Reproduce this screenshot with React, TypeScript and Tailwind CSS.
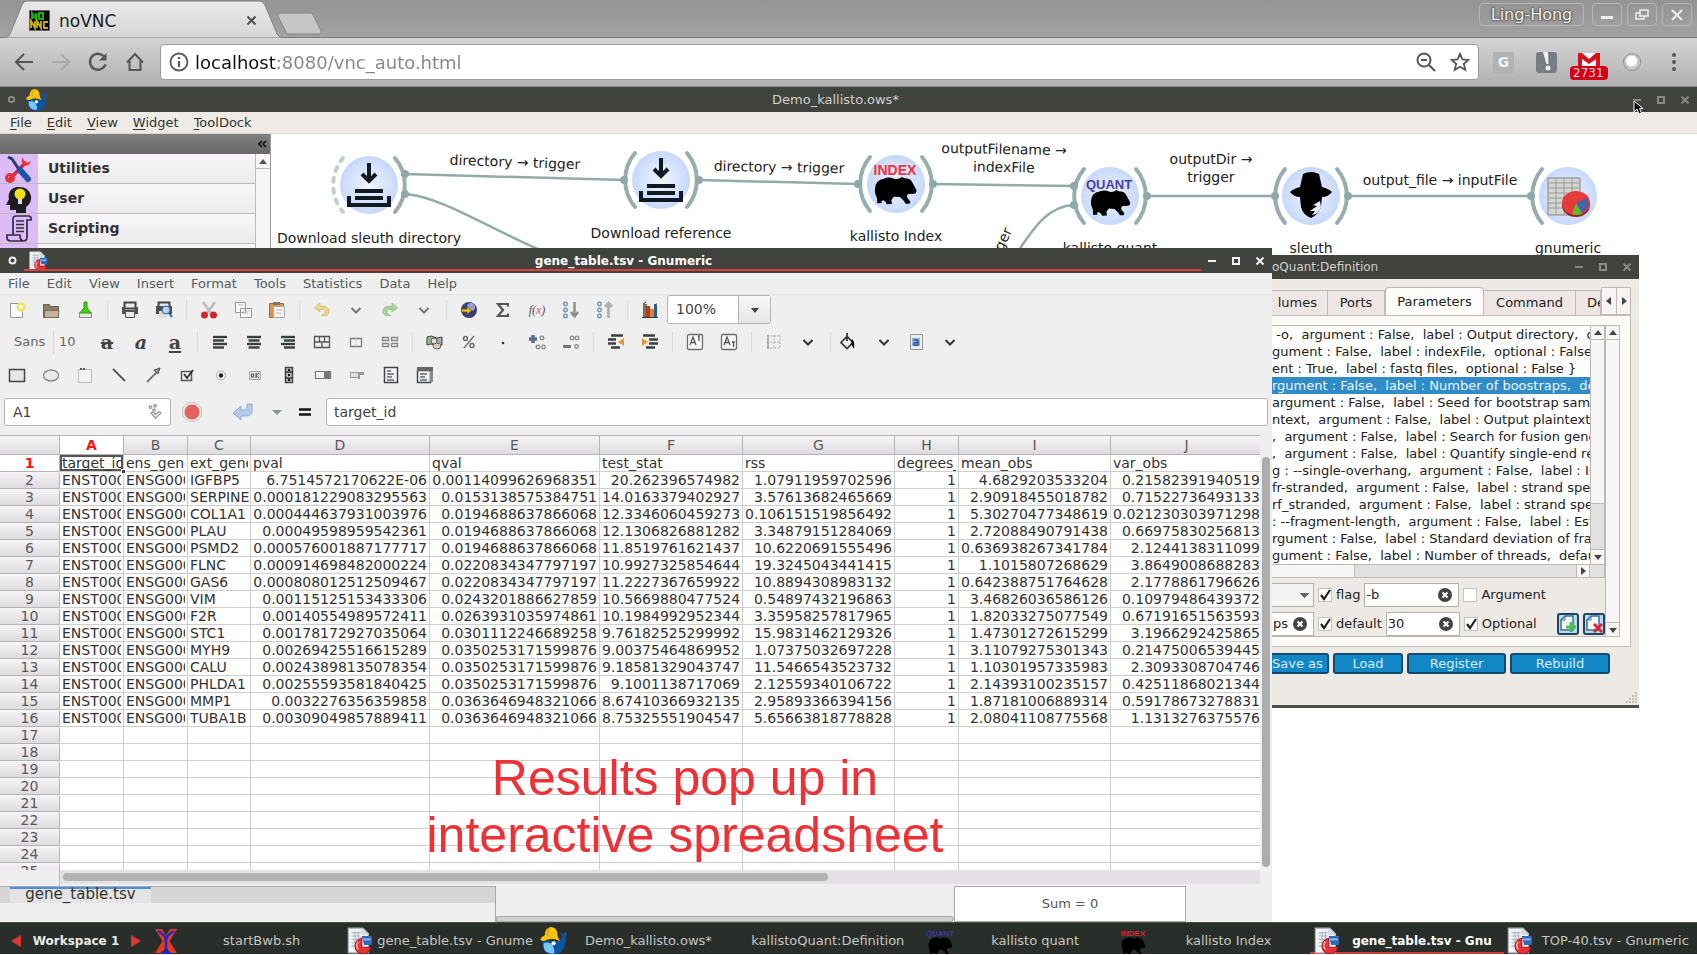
import React from "react";

type Kids = { children?: React.ReactNode };

/* ---------- icons ---------- */

function Ic({ children, label }: Kids & { label?: string }) {
  return (
    <svg width="18" height="18" viewBox="0 0 18 18" fill="none" aria-hidden={label ? undefined : true}>
      {children}
    </svg>
  );
}

const Chevron = ({ color = "#333" }: { color?: string }) => (
  <Ic><path d="M4.500 7l4.500 4.500L13.500 7" stroke={color} strokeWidth="2" /></Ic>
);

const AlignIcon = ({ x }: { x: number[] }) => (
  <Ic>
    {x.map((v, i) => (
      <path key={i} d={`M${v} ${4 + i * 3.5}h${i % 2 ? 11 : 14}`} stroke="#3c3f40" strokeWidth="2.400" />
    ))}
  </Ic>
);

const BearPath =
  "M3 35Q5 8 30 5Q45 -2 60 5Q68 8 78 4L84 0L92 4Q108 4 114 14L127 38Q130 48 120 50L104 51Q97 55 99 61L109 74L107 80L95 80L90 72L78 60L60 59Q50 68 53 75L54 81L38 82L36 76L28 70L22 72L24 78L10 79L9 62Q1 50 3 35Z";

const GnumericDoc = ({ size }: { size: number }) => (
  <svg width={size} height={size} viewBox="0 0 24 24" aria-hidden="true">
    <path d="M2 1h13l5 5v17H2z" fill="#f3f3f3" stroke="#aab0b5" />
    <path d="M5 5h8M5 8h8M5 11h6M5 14h5M5 17h4M8 4v15M11 4v10" stroke="#a9b6c6" strokeWidth="1" />
    <path d="M13 1l7 6h-6z" fill="#cfd6dd" />
    <path d="M14 8h9v8h-7z" fill="#2f6bbd" />
    <path d="M15 11h7" stroke="#8db6ea" strokeWidth="1.800" />
    <path d="M14 10A7 7 0 1 0 22 18h-8z" fill="#e5343a" stroke="#a81c20" />
    <path d="M11 13q-3 4 0 7" stroke="#ff9d9d" fill="none" strokeWidth="1.500" />
  </svg>
);

const Whale = ({ size }: { size: number }) => (
  <svg width={size} height={size} viewBox="0 0 24 24" aria-hidden="true">
    <path d="M3 12h13q3 0 4-4l-2-3 3 1 3-2-1 4q0 16-11 16Q2 23 3 12z" fill="#0a55a6" />
    <path d="M4 14q4-2 7 1 3 4 2 8Q3 23 4 14z" fill="#7cc6f5" />
    <path d="M1 11q1-3 4-4 0-6 5-7 6 0 6 8l2 4q-6-3-11-1-3 2-6 0z" fill="#f9c40f" />
    <path d="M9 1q-2 3-1 7" stroke="#d69d00" fill="none" />
    <circle cx="12.500" cy="14" r="1.800" fill="#fff" />
  </svg>
);

const TaskBear = ({ color, word }: { color: string; word: string }) => (
  <svg width="28" height="30" viewBox="0 0 28 30" aria-hidden="true">
    <text x="14" y="10" textAnchor="middle" fontFamily="Liberation Sans, sans-serif" fontWeight="700" fontSize="8" fill={color}>{word}</text>
    <path d={BearPath} transform="translate(2 11) scale(.19 .22)" fill="#000" />
  </svg>
);

/* ---------- browser chrome ---------- */

function Browser() {
  return (
    <header className="shrink-0 bg-[#9b9b9b]">
      <div className="flex h-[38px] items-start justify-between border-b border-[#7d7d7d] bg-gradient-to-b from-[#949494] to-[#a2a2a2]">
        <div className="flex">
          <div className="relative flex h-[38px] w-[288px] items-center">
            <svg className="absolute inset-0" width="288" height="38" viewBox="0 0 288 38" aria-hidden="true">
              <defs><linearGradient id="tab" x2="0" y2="1"><stop stopColor="#e9e9e9" /><stop offset="1" stopColor="#d6d6d6" /></linearGradient></defs>
              <path d="M0 38q8 1 10-4L22 5q1-4 5-4h232q4 0 6 4l12 29q2 4 8 4z" fill="url(#tab)" stroke="#808080" />
            </svg>
            <div className="relative flex w-full items-center pl-[29px] pr-[30px] pt-[3px]">
              <svg width="21" height="21" viewBox="0 0 21 21" aria-hidden="true">
                <path d="M.5.500h20v20H.5z" fill="#000" stroke="#666" />
                <path d="M3 9V3l4 6V3M10 3h4v6h-4z" stroke="#11b411" strokeWidth="2" fill="none" />
                <path d="M2 18v-7l4 7v-7M8 18v-7l4 7v-7M19 12h-4v6h4" stroke="#c9b20a" strokeWidth="1.800" fill="none" />
              </svg>
              <span className="ml-[9px] flex-1 text-[17px] leading-6 text-[#1c1c1c]">noVNC</span>
              <button aria-label="Close tab">
                <svg width="12" height="12" viewBox="0 0 12 12"><path d="M1.500 1.500l8 8M9.500 1.500l-8 8" stroke="#505050" strokeWidth="2" /></svg>
              </button>
            </div>
          </div>
          <button aria-label="New tab" className="-ml-3 mt-[9px]">
            <svg width="48" height="24" viewBox="0 0 48 24"><path d="M4 1h30q2 0 3 2l8 16q1 3-2 3H13q-2 0-3-2L2 4q-1-3 2-3z" fill="#c6c6c6" stroke="#848484" /></svg>
          </button>
        </div>
        <div className="flex gap-[5px] pr-[5px] pt-[3px]">
          <button className="mr-[3px] h-[23px] w-[105px] rounded-sm border border-[#b5b5b5] text-[16px] leading-5 text-[#f2f2f2] [text-shadow:0_0_2px_#333,0_0_2px_#333]">Ling-Hong</button>
          {["Minimize", "Restore", "Close"].map((n) => (
            <button key={n} aria-label={n} className="flex h-[23px] w-[30px] items-center justify-center rounded-sm border border-[#b5b5b5]">
              <svg width="14" height="14" viewBox="0 0 14 14" fill="none" stroke="#f0f0f0" strokeWidth="2">
                {n === "Minimize" && <path d="M1 9.500h12" strokeWidth="3" />}
                {n === "Restore" && <path d="M5 2h8v6H5zM5 5H1v6h8V8" strokeWidth="1.500" />}
                {n === "Close" && <path d="M2 2l10 10M12 2L2 12" />}
              </svg>
            </button>
          ))}
        </div>
      </div>
      <div className="flex h-[49px] items-center border-b border-[#8b8b8b] bg-gradient-to-b from-[#d4d4d4] to-[#b0b0b0]">
        <nav className="flex w-[160px] shrink-0 gap-[15px] pl-[13px]">
          <button aria-label="Back"><svg width="22" height="22" viewBox="0 0 22 22" fill="none" stroke="#555" strokeWidth="2"><path d="M20 11H3M11 3l-8 8 8 8" /></svg></button>
          <button aria-label="Forward"><svg width="22" height="22" viewBox="0 0 22 22" fill="none" stroke="#aaa" strokeWidth="2"><path d="M2 11h17M11 3l8 8-8 8" /></svg></button>
          <button aria-label="Reload"><svg width="22" height="22" viewBox="0 0 22 22" fill="none" stroke="#555" strokeWidth="2.400"><path d="M18.500 13.500A8 8 0 1 1 16.500 5l2 2" /><path d="M19.500 2v7.500H12z" fill="#555" stroke="none" /></svg></button>
          <button aria-label="Home"><svg width="22" height="22" viewBox="0 0 22 22" fill="none" stroke="#555" strokeWidth="2"><path d="M3 11.500L11 3l8 8.500M5.500 10v9h11v-9" /></svg></button>
        </nav>
        <div className="flex h-[36px] flex-1 items-center rounded border border-[#9a9a9a] bg-white pl-2 pr-2">
          <svg width="20" height="20" viewBox="0 0 20 20" fill="none" stroke="#5a5a5a" strokeWidth="1.800" aria-hidden="true"><circle cx="10" cy="10" r="8.500" /><path d="M10 9v6M10 5v2" strokeWidth="2.200" /></svg>
          <input aria-label="Address" defaultValue="localhost:8080/vnc_auto.html" className="ml-[6px] min-w-0 flex-1 bg-[linear-gradient(90deg,#111_81px,#858585_81px)] bg-clip-text text-[18px] text-transparent outline-none" />
          <button aria-label="Zoom" className="mr-[14px]"><svg width="20" height="20" viewBox="0 0 20 20" fill="none" stroke="#555" strokeWidth="2"><circle cx="8" cy="8" r="6.500" /><path d="M13 13l6 6M5 8h6" /></svg></button>
          <button aria-label="Bookmark"><svg width="20" height="20" viewBox="0 0 20 20" fill="none" stroke="#555" strokeWidth="1.800"><path d="M10 1.800l2.400 5.600 6 .5-4.600 4 1.500 6L10 14.700 4.700 17.900l1.500-6-4.600-4 6-.5z" /></svg></button>
        </div>
        <div className="flex w-[218px] shrink-0 items-center pl-[14px]">
          <button className="h-[21px] w-[21px] bg-[#b2b2b2] text-[14px] font-bold leading-5 text-[#f2f2f2]">G</button>
          <button aria-label="Alert extension" className="ml-[22px]"><svg width="21" height="21" viewBox="0 0 21 21"><rect width="21" height="21" rx="3" fill="#797d82" /><path d="M7 0l5 0 .5 12h-2z" fill="#eee" /><circle cx="12" cy="16" r="2.500" fill="#eee" /></svg></button>
          <button className="ml-[13px] flex flex-col items-center pt-[8px]">
            <svg width="22" height="13" viewBox="0 0 22 13" aria-hidden="true"><path d="M0 0h22v13H0z" fill="#fff" /><path d="M0 0h4l7 6 7-6h4v13h-4V6l-7 5-7-5v7H0z" fill="#d5121c" /></svg>
            <span className="h-[14px] w-[38px] rounded-sm bg-[#d3001c] pl-[3px] text-left text-[12px] leading-[14px] text-[#ffd0d0]">2731</span>
          </button>
          <button aria-label="Recorder extension" className="ml-[14px]"><svg width="20" height="20" viewBox="0 0 20 20"><circle cx="10" cy="10" r="8.500" fill="#c9c9c9" stroke="#8e8e8e" /><circle cx="9.500" cy="9" r="5.500" fill="#fff" /></svg></button>
          <button aria-label="Menu" className="ml-[24px]"><svg width="16" height="20" viewBox="0 0 16 20" fill="#555"><circle cx="8" cy="3" r="2" /><circle cx="8" cy="10" r="2" /><circle cx="8" cy="17" r="2" /></svg></button>
        </div>
      </div>
    </header>
  );
}

function WinButtons({ color }: { color: string }) {
  return (
    <div className="flex gap-[14px]">
      <button aria-label="Minimize window"><svg width="10" height="10" viewBox="0 0 10 10"><path d="M1 5h8" stroke={color} strokeWidth="2" /></svg></button>
      <button aria-label="Maximize window"><svg width="10" height="10" viewBox="0 0 10 10"><path d="M2 2h6v6H2z" stroke={color} strokeWidth="2" fill="none" /></svg></button>
      <button aria-label="Close window"><svg width="10" height="10" viewBox="0 0 10 10"><path d="M1.500 1.500l7 7M8.500 1.500l-7 7" stroke={color} strokeWidth="2" /></svg></button>
    </div>
  );
}

/* ---------- workflow window ---------- */

const nodes = [
  { x: 369, y: 51, kind: "download", label: "Download sleuth directory", ly: 104 },
  { x: 661, y: 46, kind: "download", label: "Download reference", ly: 99 },
  { x: 896, y: 50, kind: "index", label: "kallisto Index", ly: 102 },
  { x: 1110, y: 62, kind: "quant", label: "kallisto quant", ly: 114 },
  { x: 1311, y: 62, kind: "sleuth", label: "sleuth", ly: 114 },
  { x: 1568, y: 62, kind: "gnumeric", label: "gnumeric", ly: 114 },
];

const linkLabels = [
  { x: 515, y: 28, text: "directory → trigger", cls: "rotate-2" },
  { x: 779, y: 33, text: "directory → trigger", cls: "rotate-1" },
  { x: 1004, y: 24, text: "outputFilename →\nindexFile", cls: "rotate-1" },
  { x: 1211, y: 34, text: "outputDir →\ntrigger", cls: "rotate-0" },
  { x: 1440, y: 46, text: "output_file → inputFile", cls: "rotate-0" },
  { x: 1003, y: 105, text: "ger", cls: "-rotate-[65deg]" },
];

function NodeArt({ kind }: { kind: string }) {
  if (kind === "download")
    return (
      <g stroke="#111a20" fill="none">
        <path d="M0-22v16M-7-11l7 7 7-7" strokeWidth="4" />
        <path d="M-14 6h28M-14 13h28" strokeWidth="4" />
        <path d="M-20 11v9h40v-9" strokeWidth="4" />
      </g>
    );
  if (kind === "index" || kind === "quant")
    return (
      <g>
        <text x="-1" y={kind === "index" ? -9 : -7} textAnchor="middle" fontFamily="Liberation Sans, sans-serif" fontWeight="700" fontSize={kind === "index" ? 14 : 13} fill={kind === "index" ? "#f0303e" : "#4a3fa5"}>{kind.toUpperCase()}</text>
        <path d={BearPath} transform={kind === "index" ? "translate(-22 -7) scale(.333)" : "translate(-20 -6) scale(.315)"} fill="#000" />
      </g>
    );
  if (kind === "sleuth")
    return (
      <g>
        <path d="M-8-22q8-4 16 0l3 13q7 2 10 5-4 5-10 5l-1 10q-3 8-10 11-8-3-10-11l-1-10q-6 0-10-5 3-3 10-5z" fill="#000" />
        <path d="M9 5L2 9l4 1-7 5 5 0-3 4q7-1 9-8z" fill="#e8eefc" />
      </g>
    );
  return (
    <g>
      <path d="M-20-18h32v37h-32z" fill="#d4d4d0" stroke="#84847e" />
      <path d="M-19-13h30M-19-8h30M-19-3h30M-19 2h30M-19 7h20M-19 12h18M-12-17v35M-4-17v35M4-17v20" stroke="#9b9b98" />
      <ellipse cx="8" cy="9" rx="14" ry="12" fill="#9b1c1c" />
      <ellipse cx="8" cy="7" rx="14" ry="12" fill="#e53b3b" />
      <path d="M8 7l11-5q4 9-5 15z" fill="#3c66ad" />
      <path d="M8 7l6 11q-6 2-10 0z" fill="#5dbb2f" />
    </g>
  );
}

const arc = (s: number) => `M${s * 26}-27A42 42 0 0 ${s > 0 ? 1 : 0} ${s * 26} 27`;

function Workflow() {
  return (
    <div className="relative flex-1 overflow-hidden bg-white">
      <div className="absolute inset-y-0 -left-[271px] w-[1697px]">
        <svg className="absolute inset-0" width="1697" height="150" viewBox="0 0 1697 150" aria-hidden="true">
          <defs><radialGradient id="node"><stop stopColor="#f0f5ff" /><stop offset="1" stopColor="#c6d8fa" /></radialGradient></defs>
          <g stroke="#93aaab" strokeWidth="2.500" fill="none">
            <path d="M405 40L624 46M405 60C440 62 490 95 540 116M699 46L858 50M933 50L1074 52M1074 71C1050 72 1036 90 1019 116M1147 62H1275M1348 62H1531" />
          </g>
          {nodes.map((n, i) => (
            <g key={n.x} transform={`translate(${n.x} ${n.y})`}>
              <circle r="29" fill="url(#node)" />
              <g strokeWidth="4" strokeLinecap="round" fill="none">
                <path d={arc(-1)} strokeDasharray={i === 0 ? "4 7" : undefined} stroke={i === 0 ? "#c4cdcd" : "#98adae"} />
                {i < 5 && <path d={arc(1)} stroke="#98adae" />}
              </g>
              <NodeArt kind={n.kind} />
            </g>
          ))}
          <g fill="#8fa8aa">
            {[[405, 40], [405, 60], [624, 46], [699, 46], [858, 50], [933, 50], [1074, 52], [1074, 71], [1147, 62], [1275, 62], [1348, 62], [1531, 62]].map(([x, y]) => (
              <circle key={`${x}-${y}`} cx={x} cy={y} r="4" />
            ))}
          </g>
        </svg>
        {nodes.map((n) => (
          <span key={n.label} className="absolute -translate-x-1/2 -translate-y-1/2 whitespace-nowrap text-[14px] leading-[18px] text-[#222]" style={{ left: n.x, top: n.ly }}>{n.label}</span>
        ))}
        {linkLabels.map((l) => (
          <span key={l.x} className="absolute -translate-x-1/2 -translate-y-1/2 whitespace-pre text-center text-[14px] leading-[18px] text-[#222]" style={{ left: l.x, top: l.y }}>
            <span className={`inline-block ${l.cls}`}>{l.text}</span>
          </span>
        ))}
      </div>
    </div>
  );
}

function SideIcon({ name }: { name: string }) {
  return (
    <svg width="28" height="28" viewBox="0 0 28 28" fill="none" aria-hidden="true">
      {name === "Utilities" && (
        <g>
          <path d="M4 25L21 7" stroke="#cf2f3f" strokeWidth="3.500" />
          <path d="M18 2q-3 6 1 8 5 2 7-4l-4 2-3-2z" fill="#e8303f" />
          <circle cx="5" cy="23" r="3.500" stroke="#e8303f" strokeWidth="3" />
          <path d="M3 2l4 2 8 12" stroke="#263f78" strokeWidth="3" />
          <path d="M15 15l8 9" stroke="#1d55a5" strokeWidth="6" strokeLinecap="round" />
        </g>
      )}
      {name === "User" && (
        <g>
          <path d="M14 2C4 2 3 10 4 14l-3 6h4v5h6v3h10v-6q6-4 5-11-2-9-12-9z" fill="#1c1c22" />
          <circle cx="15" cy="9" r="5.500" fill="#f6dd18" /><path d="M13 14h4v5h-4z" fill="#d9d9d9" />
        </g>
      )}
      {name === "Scripting" && (
        <g stroke="#332a3f" strokeWidth="1.700">
          <path d="M8 20V4q0-3 3-3h13q3 1 2 4h-4v17q0 4-4 4H5q-4-1-3-6h13q0 5 3 6" />
          <path d="M11 6h8M11 9.500h8M11 13h8M11 16.500h8" />
        </g>
      )}
    </svg>
  );
}

function MainWindow() {
  return (
    <section className="flex flex-1 flex-col">
      <div className="flex h-[25px] shrink-0 items-center justify-between bg-[#41433f] pl-[7px] pr-[7px] text-[13px] text-[#d0d0cc]">
        <div className="flex items-center gap-[9px]">
          <svg width="9" height="9" viewBox="0 0 9 9" aria-hidden="true"><circle cx="4.500" cy="4.500" r="2.700" fill="none" stroke="#8c8e8a" strokeWidth="1.800" /></svg>
          <Whale size={22} />
        </div>
        <h1 className="pr-[8px] text-[13px]">Demo_kallisto.ows*</h1>
        <WinButtons color="#888a86" />
      </div>
      <nav className="flex h-[22px] shrink-0 items-center gap-[15px] border-b border-[#dcd8d2] bg-[#eeebe6] pl-[10px] text-[13px] leading-5 text-[#333]">
        {["File", "Edit", "View", "Widget", "ToolDock"].map((m) => (
          <button key={m}><span className="underline decoration-1 underline-offset-2">{m[0]}</span>{m.slice(1)}</button>
        ))}
      </nav>
      <div className="flex h-[150px]">
        <aside className="flex w-[271px] shrink-0 flex-col border-r border-[#9a9a9a]">
          <div className="flex h-[20px] shrink-0 items-center justify-end bg-gradient-to-b from-[#808080] to-[#696969] pr-[3px]">
            <button aria-label="Collapse"><svg width="9" height="8" viewBox="0 0 9 8" fill="none" stroke="#111" strokeWidth="1.600"><path d="M4 1L1 4l3 3M8 1L5 4l3 3" /></svg></button>
          </div>
          <div className="flex min-h-0 flex-1 overflow-hidden">
            <ul className="flex-1">
              {["Utilities", "User", "Scripting"].map((s) => (
                <li key={s} className="flex h-[30px] items-center border-b border-[#bdbabd] bg-gradient-to-b from-[#f9f6f9] to-[#eceaec]">
                  <span className="flex h-full w-[38px] items-center justify-center bg-[#dcbcf6]"><SideIcon name={s} /></span>
                  <button className="pl-[10px] text-[14px] font-bold text-[#333]">{s}</button>
                </li>
              ))}
              <li className="flex h-[30px] bg-[#f7f4f7]"><span className="w-[38px] bg-[#dcbcf6]" /></li>
            </ul>
            <div className="w-[15px] border-l border-[#bbb] bg-[#f8f5f7]">
              <button aria-label="Scroll up" className="flex h-[15px] w-full items-center justify-center border-b border-[#bbb]"><svg width="8" height="5" viewBox="0 0 8 5"><path d="M0 5l4-5 4 5z" fill="#555" /></svg></button>
            </div>
          </div>
        </aside>
        <Workflow />
      </div>
    </section>
  );
}

/* ---------- definition dialog ---------- */

const params = [
  " -o,  argument : False,  label : Output directory,  def",
  "gument : False,  label : indexFile,  optional : False }",
  "ent : True,  label : fastq files,  optional : False }",
  "rgument : False,  label : Number of boostraps,  def",
  "argument : False,  label : Seed for bootstrap samp",
  "ntext,  argument : False,  label : Output plaintext",
  ",  argument : False,  label : Search for fusion gene",
  ",  argument : False,  label : Quantify single-end rea",
  "g : --single-overhang,  argument : False,  label : Inc",
  "fr-stranded,  argument : False,  label : strand spec",
  "rf_stranded,  argument : False,  label : strand spec",
  ": --fragment-length,  argument : False,  label : Est",
  "rgument : False,  label : Standard deviation of frag",
  "gument : False,  label : Number of threads,  default",
];

function Check({ label, checked }: { label: string; checked?: boolean }) {
  return (
    <label className="relative flex items-center gap-[4px]">
      <input type="checkbox" defaultChecked={checked} className="peer size-[14px] appearance-none border border-[#c5c1bc] bg-white" />
      <svg className="absolute left-[2px] hidden peer-checked:block" width="11" height="12" viewBox="0 0 11 12" fill="none" aria-hidden="true"><path d="M1 6l3 4 6-9" stroke="#222" strokeWidth="2.200" /></svg>
      {label}
    </label>
  );
}

function ClearField({ label, value, cls }: { label: string; value: string; cls: string }) {
  return (
    <div className={`flex h-[24px] items-center border border-[#b3afab] bg-white pr-[6px] ${cls}`}>
      <input aria-label={label} defaultValue={value} className="w-0 min-w-0 flex-1 pl-[1px] outline-none" />
      <button aria-label={`Clear ${label}`}><svg width="14" height="14" viewBox="0 0 14 14"><circle cx="7" cy="7" r="7" fill="#444" /><path d="M4.500 4.500l5 5M9.500 4.500l-5 5" stroke="#fff" strokeWidth="2" /></svg></button>
    </div>
  );
}

const Tri = ({ d }: { d: string }) => (
  <svg width="10" height="10" viewBox="0 0 10 10" aria-hidden="true"><path d={d} fill="#444" /></svg>
);
const UP = "M1 7l4-5 4 5z";
const DOWN = "M1 3l4 5 4-5z";
const LEFT = "M7 1L2 5l5 4z";
const RIGHT = "M3 1l5 4-5 4z";

function Definition() {
  const tab = "flex h-[25px] items-center border border-b-0 border-l-0 border-[#c0bbb7] bg-[#eee6e4]";
  return (
    <section className="absolute left-[1272px] top-[168px] flex h-[453px] w-[367px] flex-col overflow-hidden border-b-[3px] border-[#4b4f4b] bg-[#edeae5] text-[13px] text-[#222]">
      <div className="flex h-[24px] shrink-0 items-center justify-between bg-[#41433f] pr-[7px] text-[#d0d0cc]">
        <h2 className="text-[12px]">oQuant:Definition</h2>
        <WinButtons color="#888a86" />
      </div>
      <div className="flex h-[36px] shrink-0 items-end pr-[8px]" role="tablist">
        <button role="tab" className={`${tab} w-[56px] justify-end pr-[10px]`}>lumes</button>
        <button role="tab" className={`${tab} w-[57px] justify-center`}>Ports</button>
        <button role="tab" aria-selected="true" className="flex h-[28px] w-[99px] items-center justify-center rounded-t border border-b-0 border-[#c0bbb7] bg-[#fdfcfa]">Parameters</button>
        <button role="tab" className={`${tab} w-[92px] justify-center`}>Command</button>
        <button role="tab" className={`${tab} w-[25px] overflow-hidden pl-[11px]`}>De</button>
        <button aria-label="Previous tabs" className="flex h-[28px] w-[15px] items-center justify-center border border-r-0 border-[#c0bbb7] bg-[#f7f5f3]"><Tri d={LEFT} /></button>
        <button aria-label="Next tabs" className="flex h-[28px] w-[15px] items-center justify-center border border-[#c0bbb7] bg-[#f7f5f3]"><Tri d={RIGHT} /></button>
      </div>
      <div className="mr-[8px] border border-l-0 border-[#c0bbb7] bg-[#fcfaf6] pb-[9px] pr-[10px] pt-[9px]">
        <div className="flex border border-l-0 border-[#bdb9b5]">
          <div className="min-w-0 flex-1 bg-[#edeae5]">
            <div className="flex">
              <ul className="h-[238px] min-w-0 flex-1 overflow-hidden bg-white">
                {params.map((p, i) => (
                  <li key={p} className={`h-[17px] overflow-hidden whitespace-pre leading-[17px] ${i === 3 ? "bg-[#308cc6] text-[#e9f4fb]" : ""}`}>{p}</li>
                ))}
              </ul>
              <div className="flex w-[15px] flex-col border-x border-[#bdb9b5] bg-[#f8f5f7]">
                <button aria-label="Scroll list up" className="flex h-[14px] items-center justify-center border-b border-[#bdb9b5]"><Tri d={UP} /></button>
                <div className="flex-1" />
                <div className="h-[47px] border-y border-[#bdb9b5] bg-[#e2e1e1]" />
                <button aria-label="Scroll list down" className="flex h-[14px] items-center justify-center"><Tri d={DOWN} /></button>
              </div>
            </div>
            <div className="flex h-[14px] border-y border-r border-[#bdb9b5] bg-[#e2e1e1]">
              <div className="w-[83px] border-r border-[#bdb9b5] bg-[#f8f5f7]" />
              <div className="flex-1" />
              <button aria-label="Scroll list right" className="mr-[14px] flex w-[14px] items-center justify-center border-x border-[#bdb9b5] bg-[#f8f5f7]"><Tri d={RIGHT} /></button>
            </div>
            <div className="flex h-[34px] items-center gap-[4px]">
              <select aria-label="Parameter type" className="h-[24px] w-[42px] shrink-0 appearance-none border border-l-0 border-[#b3afab] bg-[#f6f3f4] bg-[linear-gradient(45deg,transparent_50%,#666_50%),linear-gradient(-45deg,transparent_50%,#666_50%)] bg-[length:5px_5px,5px_5px] bg-[position:27px_9px,32px_9px] bg-no-repeat"><option /></select>
              <Check label="flag" checked />
              <ClearField label="flag value" value="-b" cls="w-[95px]" />
              <Check label="Argument" />
            </div>
            <div className="flex h-[24px] items-center gap-[4px]">
              <ClearField label="label value" value="ps" cls="w-[42px] shrink-0 border-l-0" />
              <Check label="default" checked />
              <ClearField label="default value" value="30" cls="w-[74px]" />
              <Check label="Optional" checked />
              <div className="ml-auto flex gap-[4px]">
                {["Add", "Remove"].map((n) => (
                  <button key={n} aria-label={n} className="flex size-[22px] items-center justify-center rounded-[3px] border-2 border-[#1f4560] bg-[#b5dcf0]">
                    <svg width="18" height="18" viewBox="0 0 18 18" fill="none">
                      <path d="M6 1h8v14H2V5z" fill="#f4fbff" stroke="#3f6c9c" strokeWidth="1.500" /><path d="M6 1v4H2" stroke="#3f6c9c" />
                      {n === "Add" ? <path d="M12 7v10M7 12h10" stroke="#4cc04f" strokeWidth="3" /> : <path d="M9 9l8 8M17 9l-8 8" stroke="#e02434" strokeWidth="3" />}
                    </svg>
                  </button>
                ))}
              </div>
            </div>
          </div>
          <div className="flex w-[14px] shrink-0 flex-col justify-between border-l border-[#bdb9b5] bg-[#f8f5f7]">
            <button aria-label="Scroll up" className="flex h-[14px] items-center justify-center border-b border-[#bdb9b5]"><Tri d={UP} /></button>
            <button aria-label="Scroll down" className="flex h-[14px] items-center justify-center border-t border-[#bdb9b5]"><Tri d={DOWN} /></button>
          </div>
        </div>
      </div>
      <div className="mt-[6px] flex gap-[4px] text-[#d8edf9]">
        <button className="h-[21px] w-[57px] whitespace-nowrap rounded-r-[3px] border-2 border-l-0 border-[#17486e] bg-[#1287c6] pr-[8px] text-right leading-4">Save as</button>
        <button className="h-[21px] w-[70px] rounded-[3px] border-2 border-[#17486e] bg-[#1287c6] leading-4">Load</button>
        <button className="h-[21px] w-[99px] rounded-[3px] border-2 border-[#17486e] bg-[#1287c6] leading-4">Register</button>
        <button className="h-[21px] w-[100px] rounded-[3px] border-2 border-[#17486e] bg-[#1287c6] leading-4">Rebuild</button>
      </div>
      <svg className="absolute bottom-0 right-0" width="14" height="14" viewBox="0 0 14 14" fill="#c2beb8" aria-hidden="true">
        <path d="M10 1h2v2h-2zM7 4h2v2H7zM10 4h2v2h-2zM4 7h2v2H4zM7 7h2v2H7zM10 7h2v2h-2zM1 10h2v2H1zM4 10h2v2H4zM7 10h2v2H7zM10 10h2v2h-2z" />
      </svg>
    </section>
  );
}

/* ---------- Gnumeric window ---------- */

function Tool({ name, children }: Kids & { name: string }) {
  return <button aria-label={name} className="flex w-[34px] shrink-0 items-center justify-center">{children}</button>;
}
const Sep = () => <span className="mx-[5px] h-[20px] w-px shrink-0 bg-[#d9d9d9]" />;

function ToolbarMain() {
  return (
    <div className="flex h-[29px] items-center">
      <Tool name="New"><Ic><path d="M2.500 2.500h12v14h-12z" fill="#fafafa" stroke="#999" /><circle cx="13" cy="6" r="4.500" fill="#efe25a" /><circle cx="13" cy="6" r="2" fill="#fff" /></Ic></Tool>
      <Tool name="Open"><Ic><path d="M1.500 3.500h6l1 2h8v11h-15z" fill="#8f7c69" stroke="#665" /><path d="M3 9.500h14l-1 7H2.500z" fill="#c9b49c" stroke="#776b5e" /></Ic></Tool>
      <Tool name="Save"><Ic><path d="M3.500 11.500h12v5h-12z" fill="#e3e6e3" stroke="#8b8f8b" /><path d="M8 1h3v6q3 3 4 5H4q1-2 4-5z" fill="#45cf14" stroke="#2e9b0b" /></Ic></Tool>
      <Sep />
      <Tool name="Print"><Ic><path d="M3.500 1.500h11v6h-11z" fill="#e8e8e8" stroke="#444" strokeWidth="2" /><path d="M1 6h3v3h10V6h3v7H1z" fill="#4b4f52" /><path d="M4.500 10.500h9v6h-9z" fill="#e9e9e9" stroke="#555" /></Ic></Tool>
      <Tool name="Print preview"><Ic><path d="M3.500 1.500h11v6h-11z" fill="#dce8f5" stroke="#444" strokeWidth="2" /><path d="M1 5h16v8H1z" fill="#4b4f52" /><path d="M4 10h8v7H4z" fill="#ddd" /><circle cx="11" cy="9" r="4" fill="#b7d4f2" stroke="#2f62a8" /><path d="M14 12l3 4" stroke="#2f62a8" strokeWidth="2" /></Ic></Tool>
      <Sep />
      <Tool name="Cut"><Ic><path d="M3 1l8 11M15 1L7 12" stroke="#b9bbbb" strokeWidth="2.500" /><circle cx="4.500" cy="14" r="3.500" fill="#d3252c" /><circle cx="13.500" cy="14" r="3.500" fill="#d3252c" /></Ic></Tool>
      <Tool name="Copy"><Ic><path d="M1.500 1.500h10v10h-10zM6.500 7.500h11v9h-11z" fill="#f7f7f7" stroke="#999" /><path d="M9 10h6M9 12h5M4 4h5" stroke="#bbb" /></Ic></Tool>
      <Tool name="Paste"><Ic><path d="M1.500 2.500h14v14h-14z" fill="#d8984d" stroke="#a06a28" /><path d="M5 1h7v3H5z" fill="#777" /><path d="M5.500 5.500h11v11h-11z" fill="#f5f3f0" stroke="#aaa" /><path d="M8 9h6M8 12h5" stroke="#bbb" /></Ic></Tool>
      <Sep />
      <Tool name="Undo"><Ic><path d="M7 2L1.500 7 7 11V8.500q6-1 5 3-1 3-4 3 8 1 8-4 0-6-9-5z" fill="#ecd48a" stroke="#d8c07a" /></Ic></Tool>
      <Tool name="Undo history"><Chevron color="#777" /></Tool>
      <Tool name="Redo"><Ic><path d="M11 2l5.500 5-5.500 4V8.500q-6-1-5 3 1 3 4 3-8 1-8-4 0-6 9-5z" fill="#a8d59b" stroke="#93c386" /></Ic></Tool>
      <Tool name="Redo history"><Chevron color="#777" /></Tool>
      <Sep />
      <Tool name="Hyperlink"><Ic><circle cx="9" cy="9" r="8" fill="#3c3f74" /><circle cx="11" cy="6" r="4" fill="#9a9fd0" /><path d="M1 8h6V5.500l4.500 4-4.500 4V11H2z" fill="#e9bd28" stroke="#6b5205" strokeWidth=".7" /></Ic></Tool>
      <Tool name="Sum"><Ic><path d="M14 5.500V3H4l5 6-5 6h10v-2.500" stroke="#555" strokeWidth="2.200" /></Ic></Tool>
      <Tool name="Function"><span className="font-['Liberation_Serif',serif] text-[12px] italic leading-4 text-[#555]">f(<span className="text-[#d85a44]">x</span>)</span></Tool>
      <Tool name="Sort ascending"><Ic><g stroke="#6f87ad" strokeWidth="1.300"><circle cx="3.500" cy="3" r="1.800" /><circle cx="3.500" cy="9" r="1.800" /><circle cx="3.500" cy="15" r="1.800" /></g><path d="M12.500 1v14M9 11l3.500 4.500L16 11" stroke="#8e9090" strokeWidth="2.500" /></Ic></Tool>
      <Tool name="Sort descending"><Ic><g stroke="#6f87ad" strokeWidth="1.300"><circle cx="3.500" cy="3" r="1.800" /><circle cx="3.500" cy="9" r="1.800" /><circle cx="3.500" cy="15" r="1.800" /></g><path d="M12.500 17V3M9 6l3.500-4L16 6" stroke="#b0b2b2" strokeWidth="2.800" /></Ic></Tool>
      <Sep />
      <Tool name="Chart"><Ic><path d="M2 3h4v13H2z" fill="#4d8a49" /><path d="M5 5h4v11H5z" fill="#c93226" /><path d="M9 8h4v8H9z" fill="#d9862c" /><path d="M13 4h3v12h-3z" fill="#2b5c94" /><path d="M1 16.500h16M2 3l3-2M13 4l3-1" stroke="#333" /></Ic></Tool>
      <div className="flex h-[29px] w-[104px] rounded-[3px] border border-[#b4b2b4] bg-white">
        <input aria-label="Zoom" defaultValue="100%" className="w-[70px] pl-[8px] text-[14px] text-[#444] outline-none" />
        <button aria-label="Zoom levels" className="flex flex-1 items-center justify-center border-l border-[#b4b2b4] bg-gradient-to-b from-[#f8f8f8] to-[#e6e5e6]"><Tri d={DOWN} /></button>
      </div>
    </div>
  );
}

const Letter = ({ cls }: { cls: string }) => (
  <span className={`font-['DejaVu_Serif',serif] text-[19px] font-bold leading-4 text-[#444] ${cls}`}>a</span>
);

function ToolbarFormat() {
  return (
    <div className="flex h-[35px] items-center pl-[14px] text-[13px] text-[#666]">
      <button className="w-[39px] text-left">Sans</button>
      <span className="h-[24px] w-px bg-[#d9d9d9]" />
      <button className="w-[36px] pl-[5px] text-left">10</button>
      <Tool name="Bold"><Letter cls="line-through decoration-2" /></Tool>
      <Tool name="Italic"><Letter cls="italic" /></Tool>
      <Tool name="Underline"><Letter cls="underline decoration-2 underline-offset-2" /></Tool>
      <Sep />
      <Tool name="Align left"><AlignIcon x={[2, 2, 2, 2]} /></Tool>
      <Tool name="Align center"><AlignIcon x={[2, 3.5, 2, 3.5]} /></Tool>
      <Tool name="Align right"><AlignIcon x={[2, 5, 2, 5]} /></Tool>
      <Tool name="Center across"><Ic><path d="M1.500 3.500h15v11h-15zM1.500 9h15M6.500 3.500V9M11.500 3.500V9M9 9v5" stroke="#555" strokeWidth="1.300" /></Ic></Tool>
      <Tool name="Merge cells"><Ic><path d="M3.500 5.500h11v8h-11z" stroke="#777" strokeWidth="1.300" fill="#f4f4f4" /><path d="M9 5v9" stroke="#bbb" strokeDasharray="1 1" /></Ic></Tool>
      <Tool name="Split cells"><Ic><path d="M1.500 4.500h6v3h-6zM10.500 4.500h6v3h-6zM1.500 10.500h6v3h-6zM10.500 10.500h6v3h-6z" stroke="#888" strokeWidth="1.300" /></Ic></Tool>
      <Sep />
      <Tool name="Currency"><Ic><path d="M1 4q5-2 7 0t8 0v8q-5 2-8 0t-7 0z" fill="#a4aca3" stroke="#444" /><circle cx="8" cy="8" r="3" fill="#dfe3dc" stroke="#555" /><ellipse cx="11" cy="13" rx="4" ry="3" fill="#d9cfae" stroke="#666" /></Ic></Tool>
      <Tool name="Percent"><Ic><path d="M14 3L4 15" stroke="#777" strokeWidth="1.500" /><circle cx="5.500" cy="5.500" r="2" stroke="#666" strokeWidth="1.400" /><circle cx="12" cy="12.500" r="2" stroke="#666" strokeWidth="1.400" /></Ic></Tool>
      <Tool name="Thousands"><Ic><circle cx="9" cy="10" r="1.300" fill="#333" /></Ic></Tool>
      <Tool name="More decimals"><Ic><path d="M5 2v8M1 6h8" stroke="#56718d" strokeWidth="3.500" /><g stroke="#888" strokeWidth="1.300"><circle cx="14" cy="5" r="1.800" /><circle cx="10" cy="14" r="1.800" /><circle cx="15.500" cy="14" r="1.800" /></g></Ic></Tool>
      <Tool name="Fewer decimals"><Ic><path d="M1 13.500h8" stroke="#777" strokeWidth="3" /><g stroke="#888" strokeWidth="1.300"><circle cx="10" cy="5" r="1.800" /><circle cx="15" cy="5" r="1.800" /><circle cx="14.500" cy="13.500" r="1.800" /></g></Ic></Tool>
      <Sep />
      <Tool name="Decrease indent"><Ic><path d="M4 2.500h12M1 6.500h8M1 10.500h8M4 14.500h9" stroke="#3c3f40" strokeWidth="2.400" /><path d="M17 5v8l-6-4z" fill="#e8973a" /></Ic></Tool>
      <Tool name="Increase indent"><Ic><path d="M2 2.500h12M8 6.500h9M8 10.500h9M5 14.500h9" stroke="#3c3f40" strokeWidth="2.400" /><path d="M1 5v8l6-4z" fill="#e8973a" /></Ic></Tool>
      <Sep />
      <Tool name="Superscript"><Ic><rect x="1.500" y="1.500" width="15" height="15" rx="1.500" fill="#f8f8f8" stroke="#6b6b6b" strokeWidth="1.300" /><path d="M4 12l3-8 3 8M5 9.500h4M12 4l1-1v5" stroke="#555" strokeWidth="1.300" /></Ic></Tool>
      <Tool name="Subscript"><Ic><rect x="1.500" y="1.500" width="15" height="15" rx="1.500" fill="#f8f8f8" stroke="#6b6b6b" strokeWidth="1.300" /><path d="M4 12l3-8 3 8M5 9.500h4M12 9h3M13.500 9v5" stroke="#555" strokeWidth="1.300" /></Ic></Tool>
      <Sep />
      <Tool name="Borders"><Ic><path d="M3 2v14M9 2v14M15 2v14M2 9h14M2 15h14M2 3h14" stroke="#aaa" strokeDasharray="2 1.500" /><path d="M3 2v14" stroke="#888" /></Ic></Tool>
      <Tool name="Border styles"><Chevron /></Tool>
      <Sep />
      <div className="flex gap-[4px]">
        <button aria-label="Fill color" className="flex w-[22px] justify-center"><Ic><path d="M3 9.500L9 3.500l6 6-6 6zM9 0v8" stroke="#333" strokeWidth="1.700" fill="#eee" /><path d="M14 6q3 2 2 10l-3-5z" fill="#111" /></Ic></button>
        <Tool name="Fill colors"><span className="pl-[10px]"><Chevron /></span></Tool>
      </div>
      <Tool name="Font color"><span className="pl-[6px]"><Ic><path d="M3.500 1.500h12v15h-12z" fill="#e9eff6" stroke="#999" /><path d="M5 5h8v8H5z" fill="#8fb2da" /><path d="M7 7q4-1 4 2v3q-4 1-4-1t4-1" stroke="#2c5488" strokeWidth="1.400" /></Ic></span></Tool>
      <Tool name="Font colors"><span className="pl-[6px]"><Chevron /></span></Tool>
    </div>
  );
}

function ToolbarObjects() {
  return (
    <div className="flex h-[32px] items-center">
      <Tool name="Rectangle"><Ic><path d="M1.500 3.500h15v12h-15z" stroke="#444" strokeWidth="1.500" fill="#e6e6e6" /></Ic></Tool>
      <Tool name="Ellipse"><Ic><ellipse cx="9" cy="9.500" rx="7.500" ry="5.500" stroke="#888" strokeWidth="1.300" fill="#e9e9e9" /></Ic></Tool>
      <Tool name="Frame"><Ic><path d="M2.500 3.500h13v13h-13z" stroke="#bbb" fill="#f2f2f2" /><path d="M4 3h5" stroke="#555" strokeWidth="2" strokeDasharray="2 1" /></Ic></Tool>
      <Tool name="Line"><Ic><path d="M3 3l12 12" stroke="#555" strokeWidth="1.800" /></Ic></Tool>
      <Tool name="Arrow"><Ic><path d="M3 16L14 5" stroke="#777" strokeWidth="1.800" /><path d="M10 4l6-2-2 6z" fill="#9b9460" stroke="#555" /></Ic></Tool>
      <Tool name="Check box"><Ic><path d="M3.500 5.500h10v9h-10z" stroke="#555" strokeWidth="1.500" /><path d="M6 8l3 4 6-8" stroke="#333" strokeWidth="1.800" /></Ic></Tool>
      <Tool name="Radio button"><Ic><circle cx="9" cy="9.500" r="4.500" stroke="#aaa" fill="#f7f7f7" /><circle cx="9" cy="9.500" r="2.200" fill="#222" /></Ic></Tool>
      <Tool name="Button"><Ic><path d="M3.500 5.500h11v8h-11z" stroke="#aaa" fill="#ddd" /><path d="M5.500 8h2v3h-2zM10 7v5M13 7l-3 2.500 3 2.500" stroke="#555" /></Ic></Tool>
      <Tool name="Scroll bar"><Ic><path d="M5.500 1.500h7v15h-7z" stroke="#444" fill="#bbb" strokeWidth="1.500" /><path d="M5 6h8M5 12h8" stroke="#333" strokeWidth="1.500" /><path d="M9 3v2M9 8v2M9 13v2" stroke="#111" strokeWidth="2" /></Ic></Tool>
      <Tool name="Spin button"><Ic><path d="M1.500 5.500h15v7h-15z" stroke="#777" fill="#f5f5f5" strokeWidth="1.200" /><path d="M10 6h6v6h-6z" fill="#777" /></Ic></Tool>
      <Tool name="Slider"><Ic><path d="M2.500 6.500h8v5h-8z" stroke="#999" fill="#ddd" /><path d="M10 6h6v3h-4v4h-2z" fill="#999" /></Ic></Tool>
      <Tool name="List"><Ic><path d="M2.500 1.500h13v15h-13z" stroke="#444" strokeWidth="1.500" fill="#f5f5f5" /><path d="M5 5h4M5 8h7M5 11h5M5 14h7" stroke="#56647a" strokeWidth="1.300" /></Ic></Tool>
      <Tool name="Combo box"><Ic><path d="M1.500 4.500h13v12h-13z" stroke="#444" strokeWidth="1.500" fill="#f5f5f5" /><path d="M1 1h16v4H1z" fill="#666" /><path d="M14 5h3v11h-3z" fill="#888" /><path d="M4 8h7M4 11h5M4 14h7" stroke="#56647a" strokeWidth="1.300" /></Ic></Tool>
    </div>
  );
}

const cols = ["A", "B", "C", "D", "E", "F", "G", "H", "I", "J"];
const heads = ["target_id", "ens_gene", "ext_gene", "pval", "qval", "test_stat", "rss", "degrees_", "mean_obs", "var_obs"];
const rows = [
  ["IGFBP5", "6.7514572170622E-06", "0.00114099626968351", "20.262396574982", "1.07911959702596", "4.6829203533204", "0.21582391940519"],
  ["SERPINE", "0.000181229083295563", "0.0153138575384751", "14.0163379402927", "3.57613682465669", "2.90918455018782", "0.71522736493133"],
  ["COL1A1", "0.000444637931003976", "0.0194688637866068", "12.3346060459273", "0.106151519856492", "5.30270477348619", "0.021230303971298"],
  ["PLAU", "0.00049598959542361", "0.0194688637866068", "12.1306826881282", "3.34879151284069", "2.72088490791438", "0.66975830256813"],
  ["PSMD2", "0.000576001887177717", "0.0194688637866068", "11.8519761621437", "10.6220691555496", "0.636938267341784", "2.1244138311099"],
  ["FLNC", "0.000914698482000224", "0.0220834347797197", "10.9927325854644", "19.3245043441415", "1.1015807268629", "3.8649008688283"],
  ["GAS6", "0.000808012512509467", "0.0220834347797197", "11.2227367659922", "10.8894308983132", "0.642388751764628", "2.1778861796626"],
  ["VIM", "0.00115125153433306", "0.0243201886627859", "10.5669880477524", "0.54897432196863", "3.46826036586126", "0.10979486439372"],
  ["F2R", "0.00140554989572411", "0.0263931035974861", "10.1984992952344", "3.35958257817965", "1.82033275077549", "0.67191651563593"],
  ["STC1", "0.00178172927035064", "0.0301112246689258", "9.76182525299992", "15.9831462129326", "1.47301272615299", "3.1966292425865"],
  ["MYH9", "0.00269425516615289", "0.0350253171599876", "9.00375464869952", "1.07375032697228", "3.11079275301343", "0.21475006539445"],
  ["CALU", "0.00243898135078354", "0.0350253171599876", "9.18581329043747", "11.5466543523732", "1.10301957335983", "2.3093308704746"],
  ["PHLDA1", "0.00255593581840425", "0.0350253171599876", "9.1001138717069", "2.12559340106722", "2.14393100235157", "0.42511868021344"],
  ["MMP1", "0.0032276356359858", "0.0363646948321066", "8.67410366932135", "2.95893366394156", "1.87181006889314", "0.59178673278831"],
  ["TUBA1B", "0.00309049857889411", "0.0363646948321066", "8.75325551904547", "5.65663818778828", "2.08041108775568", "1.1313276375576"],
];
const grid: string[][] = [
  heads,
  ...rows.map((r) => ["ENST000", "ENSG000", ...r.slice(0, 5), "1", ...r.slice(5)]),
  ...Array.from({ length: 9 }, () => cols.map(() => "")),
];

function Sheet() {
  return (
    <div className="flex min-h-0 flex-1">
      <div className="relative min-w-0 flex-1 overflow-hidden bg-white">
        <table className="w-[1263px] table-fixed border-separate border-spacing-0 text-[14px] text-[#333]">
          <colgroup>
            <col className="w-[60px]" /><col className="w-[64px]" /><col className="w-[64px]" /><col className="w-[63px]" /><col className="w-[179px]" />
            <col className="w-[170px]" /><col className="w-[143px]" /><col className="w-[152px]" /><col className="w-[64px]" /><col className="w-[152px]" /><col />
          </colgroup>
          <thead>
            <tr>
              <th aria-label="Select all" className="h-[20px] border-b border-r border-t border-[#b5b3b5] bg-gradient-to-b from-[#f6f4f6] to-[#dedcde] p-0" />
              {cols.map((c, i) => (
                <th key={c} scope="col" className={`h-[20px] border-b border-r border-t border-[#b5b3b5] bg-gradient-to-b p-0 leading-[18px] ${i === 0 ? "from-white to-white font-bold text-[#f81414]" : "from-[#f6f4f6] to-[#dedcde] font-normal text-[#555a5b]"}`}>{c}</th>
              ))}
            </tr>
          </thead>
          <tbody>
            {grid.map((r, i) => (
              <tr key={i}>
                <th scope="row" className={`h-[17px] rounded-r-[2px] border-b border-r border-[#b5b3b5] bg-gradient-to-b p-0 leading-[16px] ${i === 0 ? "from-white to-white font-bold text-[#f81414]" : "from-[#f6f4f6] to-[#dedcde] font-normal text-[#555a5b]"}`}>{i + 1}</th>
                {r.map((v, j) => (
                  <td key={j} className={`h-[17px] overflow-hidden whitespace-nowrap border-b border-r border-[#cfcfcf] px-[2px] py-0 leading-[16px] ${i > 0 && j > 2 ? "text-right" : ""} ${i === 0 && j === 0 ? "shadow-[inset_0_0_0_2px_#555]" : ""}`}>
                    {j < 2 || i === 0 ? <div className="overflow-hidden">{v}</div> : v}
                  </td>
                ))}
              </tr>
            ))}
          </tbody>
        </table>
        <span className="absolute left-[121px] top-[34px] size-[5px] border border-white bg-[#444]" />
      </div>
      <div className="w-[12px] shrink-0 px-[2px] pb-[3px] pt-[22px]">
        <div className="h-full rounded-full bg-[#acacac]" />
      </div>
    </div>
  );
}

function Gnumeric() {
  return (
    <section className="absolute bottom-0 left-0 top-[161px] flex w-[1272px] flex-col bg-[#efefef]">
      <div className="relative grid h-[25px] shrink-0 grid-cols-[1fr_auto_1fr] items-center bg-[#41433f] pl-[8px] pr-[7px]">
        <div className="flex items-center gap-[11px]">
          <svg width="9" height="9" viewBox="0 0 9 9" aria-hidden="true"><circle cx="4.500" cy="4.500" r="3" fill="none" stroke="#eee" strokeWidth="2" /></svg>
          <GnumericDoc size={20} />
        </div>
        <h2 className="pr-[26px] text-[12px] font-bold text-white">gene_table.tsv - Gnumeric</h2>
        <div className="flex justify-end"><WinButtons color="#f2f2f2" /></div>
        <span className="absolute bottom-[2px] left-[24px] right-[71px] h-[2px] bg-[#dc4038]" />
      </div>
      <nav className="flex h-[22px] shrink-0 items-center gap-[17px] border-b border-[#e2e2e2] pl-[8px] text-[13px] leading-5 text-[#555c5d]">
        {["File", "Edit", "View", "Insert", "Format", "Tools", "Statistics", "Data", "Help"].map((m) => <button key={m}>{m}</button>)}
      </nav>
      <ToolbarMain />
      <ToolbarFormat />
      <ToolbarObjects />
      <div className="mt-[7px] flex h-[28px] shrink-0 items-center pl-[4px] pr-[4px]">
        <div className="flex h-[28px] w-[167px] items-center rounded-[3px] border border-[#b4b2b4] bg-white pr-[8px]">
          <input aria-label="Cell" defaultValue="A1" className="w-0 flex-1 pl-[8px] text-[14px] text-[#444] outline-none" />
          <button aria-label="Cell names"><svg width="14" height="16" viewBox="0 0 14 16" fill="none" stroke="#999" strokeWidth="1.300"><circle cx="2.500" cy="3" r="1.300" /><circle cx="7" cy="1.800" r="1.200" /><circle cx="6" cy="6" r="1.200" /><path d="M3 9l4.500 5L13 9l-2-1.500-3.500 3L5 8z" /></svg></button>
        </div>
        <div className="flex w-[155px] items-center pl-[11px] pr-[14px]">
          <button aria-label="Cancel" className="mr-[30px]"><svg width="20" height="20" viewBox="0 0 20 20"><path d="M6 .5h8l5.500 5.500v8L14 19.500H6L.5 14V6z" fill="#e9e3e2" stroke="#cbc5c4" /><circle cx="10" cy="10" r="7.500" fill="#e26461" /></svg></button>
          <button aria-label="Accept" className="mr-[19px]"><svg width="21" height="18" viewBox="0 0 21 18"><path d="M1 10l8-7v4h4q2 0 2-3V1h5v6q0 6-6 6H9v4z" fill="#b5cce8" stroke="#8eabd0" /></svg></button>
          <button aria-label="Accept options" className="mr-auto"><svg width="10" height="10" viewBox="0 0 10 10"><path d="M0 3l5 5 5-5z" fill="#8f9494" /></svg></button>
          <button aria-label="Enter formula"><svg width="14" height="12" viewBox="0 0 14 12"><path d="M1 3.500h12M1 8.500h12" stroke="#111" strokeWidth="2.400" /></svg></button>
        </div>
        <input aria-label="Formula" defaultValue="target_id" className="h-[28px] min-w-0 flex-1 rounded-[3px] border border-[#b4b2b4] bg-white pl-[7px] text-[14px] text-[#444] outline-none" />
      </div>
      <div className="h-[9px] shrink-0" />
      <Sheet />
      <div className="flex h-[16px] shrink-0 pr-[12px]">
        <div className="w-[60px] border-r border-[#bbb]" />
        <div className="mb-[2px] flex-1 bg-[#e4e1e4] py-[3px] pl-[3px]"><div className="h-[8px] w-[765px] rounded-full bg-[#b3b3b3]" /></div>
      </div>
      <div className="flex h-[36px] shrink-0">
        <div className="w-[496px] border-r border-t border-[#aaa]">
          <div className="flex h-[16px] items-start bg-[#d6d6d6] pl-[10px]">
            <button className="flex h-[16px] w-[141px] items-start justify-center border-t-2 border-[#4a90e2] bg-[#e4e4e4] text-[15px] leading-[11px] text-[#333]">gene_table.tsv</button>
          </div>
        </div>
        <div className="flex w-[458px] items-end"><div className="h-[6px] w-full rounded-r border border-[#aaa] bg-[#d2cfd3]" /></div>
        <div className="flex w-[232px] items-center justify-center border border-[#aaa] bg-white text-[13px] text-[#555]">Sum = 0</div>
      </div>
      <p className="pointer-events-none absolute left-[685px] top-[502px] -translate-x-1/2 whitespace-nowrap text-center font-['Liberation_Sans',Arial,sans-serif] text-[50px] leading-[57px] text-[#ed3237]">
        Results pop up in<br />interactive spreadsheet
      </p>
    </section>
  );
}

/* ---------- taskbar ---------- */

const tasks: { label: string; icon: React.ReactNode; active?: boolean }[] = [
  { label: "startBwb.sh", icon: <svg width="28" height="28" viewBox="0 0 28 28" aria-hidden="true"><path d="M3 2h7l15 24h-7z" fill="#e23a1e" /><path d="M25 2h-7L3 26h7z" fill="#e23a1e" /><path d="M6 4q8 4 8 10v12M22 4q-8 4-8 10M9 26h10" stroke="#1a2ad0" strokeWidth="2.500" fill="none" /></svg> },
  { label: "gene_table.tsv - Gnume", icon: <GnumericDoc size={27} /> },
  { label: "Demo_kallisto.ows*", icon: <Whale size={28} /> },
  { label: "kallistoQuant:Definition", icon: null },
  { label: "kallisto quant", icon: <TaskBear color="#3c3a9c" word="QUANT" /> },
  { label: "kallisto Index", icon: <TaskBear color="#d4232e" word="INDEX" /> },
  { label: "gene_table.tsv - Gnu", icon: <GnumericDoc size={27} />, active: true },
  { label: "TOP-40.tsv - Gnumeric", icon: <GnumericDoc size={27} /> },
];

function Taskbar() {
  return (
    <footer className="flex h-[32px] shrink-0 border-t border-[#4a4f4a] bg-[#292e2a]">
      <div className="flex w-[150px] shrink-0 items-center justify-between pl-[10px] pr-[8px] pt-[4px]">
        <button aria-label="Previous workspace"><svg width="12" height="14" viewBox="0 0 12 14"><path d="M11 1v12L1 7z" fill="#d8382f" /></svg></button>
        <span className="text-[12px] font-bold text-[#e9e9e6]">Workspace 1</span>
        <button aria-label="Next workspace"><svg width="12" height="14" viewBox="0 0 12 14"><path d="M1 1v12l10-6z" fill="#d8382f" /></svg></button>
      </div>
      {tasks.map((t) => (
        <button key={t.label} className={`flex min-w-0 flex-1 items-center overflow-hidden whitespace-nowrap pl-[2px] pt-[4px] ${t.active ? "text-[12px] font-bold text-white shadow-[inset_0_-2px_0_#c9403a]" : "text-[13px] text-[#c4c6c2]"}`}>
          {t.icon && <span className="flex w-[28px] shrink-0 justify-center">{t.icon}</span>}
          <span className="flex-1 text-center">{t.label}</span>
        </button>
      ))}
    </footer>
  );
}

export default function App() {
  return (
    <div className="flex h-screen flex-col overflow-hidden bg-white pb-px font-['DejaVu_Sans',Verdana,sans-serif]">
      <Browser />
      <main className="relative flex min-h-0 flex-1 flex-col bg-white">
        <MainWindow />
        <Definition />
        <Gnumeric />
        <svg className="absolute left-[1633px] top-[13px]" width="12" height="16" viewBox="0 0 12 16" aria-hidden="true">
          <path d="M1 1v11l3-3 2 5 2.500-1-2-4.500H10z" fill="#000" stroke="#fff" />
        </svg>
      </main>
      <Taskbar />
    </div>
  );
}
